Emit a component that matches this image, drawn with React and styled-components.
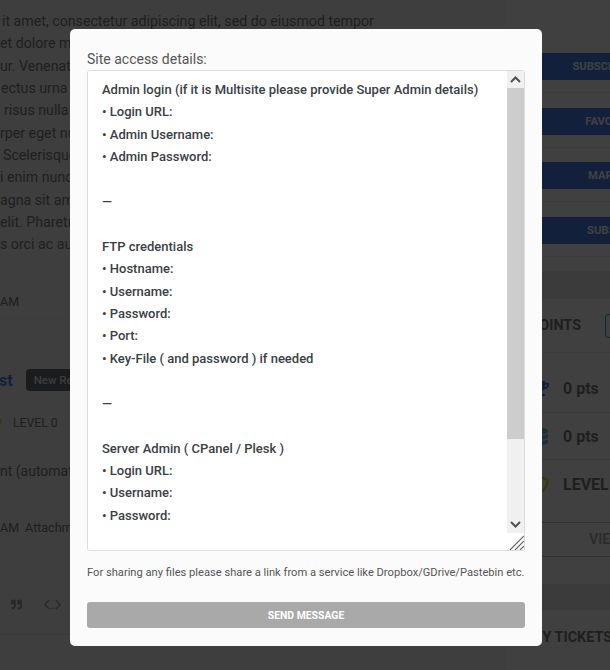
import React from "react";
import styled, { createGlobalStyle } from "styled-components";
import { FaTrophy, FaDatabase, FaShieldAlt, FaQuoteRight } from "react-icons/fa";

const hatch = `url("data:image/svg+xml,%3Csvg xmlns='http://www.w3.org/2000/svg' width='17' height='17'%3E%3Cpath d='M2 16 16 2M7 16 16 7M12 16 16 12' fill='none' stroke='%23666' stroke-width='1.2'/%3E%3C/svg%3E")`;

const GlobalStyle = createGlobalStyle`
  html, body {
    margin: 0;
    height: 100%;
    overflow: hidden;
    background: #fff;
    font-family: Roboto, "Liberation Sans", sans-serif;
  }
`;

const Page = styled.div`
  width: 610px;
  height: 670px;
  overflow: hidden;
  display: grid;
  grid-template-columns: 505px 1fr;
`;

const Main = styled.div`
  background: #f5f5f5;
  color: #7e7e7e;
  overflow: hidden;
`;

const Article = styled.div`
  padding-top: 10px;
  font-size: 14.2px;
  line-height: 22.35px;
  white-space: nowrap;
  height: 283px;
  box-sizing: border-box;
`;

const ArticleLine = styled.div`
  padding-left: ${(props) => props.indent || 0}px;
`;

const MetaRow = styled.div`
  height: 36px;
  margin-top: ${(props) => props.top || 0}px;
  display: flex;
  align-items: center;
  gap: 6px;
  font-size: 12.5px;
`;

const Divider = styled.div`
  height: 1px;
  background: #eeeeee;
`;

const ReplyHead = styled.div`
  margin-top: 39px;
  height: 42px;
  display: flex;
  align-items: center;
  gap: 13px;
  border-bottom: 1px solid #efefef;
`;

const AuthorName = styled.strong`
  font-size: 16px;
  color: #4a80f0;
  margin-left: -1px;
`;

const Chip = styled.span`
  background: #6c6f78;
  color: #ececec;
  font-size: 11.5px;
  font-weight: 500;
  height: 22px;
  padding: 0 8px;
  border-radius: 4px;
  display: flex;
  align-items: center;
`;

const LevelRow = styled.div`
  height: 42px;
  display: flex;
  align-items: center;
  gap: 11px;
  font-size: 12.2px;
  margin-left: -10px;
  border-bottom: 1px solid #efefef;
  svg {
    color: #ffcc33;
  }
`;

const ReplyText = styled.div`
  margin-top: 15px;
  font-size: 14px;
  line-height: 22px;
  white-space: nowrap;
`;

const Toolbar = styled.div`
  margin-top: 30px;
  height: 60px;
  box-sizing: border-box;
  border-bottom: 1px solid #e4e4e4;
  display: flex;
  align-items: center;
  gap: 22px;
  padding-left: 11px;
  color: #a4a4a4;
`;

const Side = styled.aside`
  background: #fff;
  overflow: hidden;
  color: #7d7d7d;
`;

const SideTitle = styled.h3`
  margin: 0 0 0 28px;
  height: 53px;
  font-size: 17px;
  font-weight: 700;
  line-height: 22px;
  transform: translateY(-18px);
`;

const ActionRow = styled.div`
  height: 40px;
  box-sizing: border-box;
  margin-bottom: 14.6px;
  border-bottom: 1px solid #ededed;
`;

const ActionButton = styled.div`
  margin-left: 20px;
  width: 206px;
  height: 27px;
  background: #4880f0;
  color: #fff;
  font-size: 11.2px;
  font-weight: 700;
  text-transform: uppercase;
  white-space: nowrap;
  display: flex;
  align-items: center;
  justify-content: center;
`;

const Band = styled.div`
  height: 28px;
  background: #ececec;
`;

const PointsHead = styled.div`
  height: 54px;
  box-sizing: border-box;
  display: flex;
  align-items: center;
  padding-left: 25px;
  font-size: 14.4px;
  font-weight: 700;
  gap: 24px;
  border-bottom: 1px solid #ececec;
`;

const BadgeBox = styled.span`
  flex: none;
  width: 40px;
  height: 24px;
  box-sizing: border-box;
  border: 1px solid #2ea3c4;
  border-radius: 3px;
`;

const StatList = styled.div`
  padding: 12px 0 14px;
  border-bottom: 1px solid #c8c8c8;
`;

const StatRow = styled.div`
  height: 47.5px;
  box-sizing: border-box;
  display: flex;
  align-items: center;
  gap: 14px;
  padding-left: 27px;
  font-size: 16px;
  font-weight: 700;
  white-space: nowrap;
  border-bottom: ${(props) => (props.last ? "0" : "1px solid #e4e4e4")};
  svg {
    flex: none;
    color: ${(props) => props.tint};
    font-size: 17px;
  }
`;

const ViewRow = styled.div`
  height: 34px;
  box-sizing: border-box;
  display: flex;
  align-items: center;
  padding-left: 84px;
  font-size: 14.4px;
  font-weight: 500;
  color: #a8a8a8;
  border-bottom: 1px solid #c8c8c8;
`;

const LowerBand = styled(Band)`
  margin-top: 27px;
  height: 26px;
`;

const TicketsHead = styled.div`
  height: 56px;
  display: flex;
  align-items: center;
  padding-left: 25px;
  font-size: 14.4px;
  font-weight: 700;
  white-space: nowrap;
`;

const Overlay = styled.div`
  position: fixed;
  inset: 0;
  background: rgba(0, 0, 0, 0.75);
`;

const Modal = styled.form`
  position: fixed;
  left: 70px;
  top: 29px;
  width: 472px;
  height: 617px;
  box-sizing: border-box;
  padding: 20px 17px 18px;
  background: #fbfbfb;
  border-radius: 5px;
  display: flex;
  flex-direction: column;
`;

const FieldLabel = styled.label`
  font-size: 14px;
  line-height: 21px;
  color: #555;
`;

const MessageBox = styled.div`
  position: relative;
  width: 438px;
  height: 481px;
`;

const Message = styled.textarea`
  display: block;
  width: 100%;
  height: 100%;
  box-sizing: border-box;
  margin: 0;
  padding: 8px 14px;
  border: 1px solid #ddd;
  border-radius: 3px;
  background: #fff;
  color: #3a4046;
  font-family: Roboto, "Liberation Sans", sans-serif;
  font-size: 13px;
  font-weight: 500;
  line-height: 22.4px;
  outline: none;
  resize: both;

  &::-webkit-resizer {
    background: #fff ${hatch} center no-repeat;
  }
`;

/* headless chromium hides native scrollbars, so this one is drawn over the textarea */
const ScrollBar = styled.div`
  position: absolute;
  top: 1px;
  right: 1px;
  bottom: 18px;
  width: 17px;
  background: #f0f0f0;
  display: flex;
  flex-direction: column;
`;

const ScrollArrow = styled.div`
  flex: none;
  height: 17px;
  display: flex;
  align-items: center;
  justify-content: center;
`;

const ScrollThumb = styled.div`
  flex: none;
  height: 351px;
  background: #cdcdcd;
`;

const ScrollRest = styled.div`
  flex: 1;
`;

const Hint = styled.p`
  margin: 14px 0 0;
  font-size: 11.15px;
  line-height: 16px;
  color: #555;
  white-space: nowrap;
`;

const SendButton = styled.button`
  margin-top: 21px;
  width: 438px;
  height: 26px;
  border: 0;
  border-radius: 3px;
  background: #a9a9a9;
  color: #fff;
  font-family: inherit;
  font-size: 10.4px;
  font-weight: 700;
  text-transform: uppercase;
`;

function Chevron({ d }) {
  return (
    <svg width="11" height="7" viewBox="0 0 11 7">
      <path d={d} fill="none" stroke="#505050" strokeWidth="2" />
    </svg>
  );
}

function CodeGlyph() {
  return (
    <svg width="17" height="11" viewBox="0 0 17 11" fill="none" stroke="currentColor" strokeWidth="1.4">
      <path d="M5 1 1 5.5 5 10M12 1 16 5.5 12 10" />
      <path d="M6.6 9.5h1.2M9.4 9.5h1.2" />
    </svg>
  );
}

const articleLines = [
  { text: "it amet, consectetur adipiscing elit, sed do eiusmod tempor", indent: 2 },
  { text: "et dolore magna aliqua" },
  { text: "ur. Venenatis urna" },
  { text: "ectus urna duis", indent: 1 },
  { text: "risus nulla at", indent: 4 },
  { text: "rper eget nulla" },
  { text: "Scelerisque eu", indent: 3 },
  { text: "i enim nunc faucibus" },
  { text: "agna sit amet purus" },
  { text: "elit. Pharetra vel" },
  { text: "s orci ac auctor" },
];

const accessDetails = `Admin login (if it is Multisite please provide Super Admin details)
• Login URL:
• Admin Username:
• Admin Password:

—

FTP credentials
• Hostname:
• Username:
• Password:
• Port:
• Key-File ( and password ) if needed

—

Server Admin ( CPanel / Plesk )
• Login URL:
• Username:
• Password:

—

Additional notes:
• Staging site:
• Theme and plugin versions:`;

const sideActions = ["Subscribe to topic", "Favorite topic", "Mark as read", "Subscribe all"];

function App() {
  return (
    <>
      <GlobalStyle />
      <Page>
        <Main>
          <Article>
            {articleLines.map((line) => (
              <ArticleLine key={line.text} indent={line.indent}>
                {line.text}
              </ArticleLine>
            ))}
          </Article>
          <MetaRow>AM</MetaRow>
          <Divider />
          <ReplyHead>
            <AuthorName>st</AuthorName>
            <Chip>New Reply</Chip>
          </ReplyHead>
          <LevelRow>
            <FaShieldAlt size={12} />
            <span>LEVEL 0</span>
          </LevelRow>
          <ReplyText>nt (automatic)</ReplyText>
          <MetaRow top={27}>
            AM <span>Attachments</span>
          </MetaRow>
          <Toolbar>
            <FaQuoteRight size={11} />
            <CodeGlyph />
          </Toolbar>
        </Main>
        <Side>
          <SideTitle>TOPIC</SideTitle>
          {sideActions.map((label) => (
            <ActionRow key={label}>
              <ActionButton>{label}</ActionButton>
            </ActionRow>
          ))}
          <Band />
          <PointsHead>
            POINTS <BadgeBox />
          </PointsHead>
          <StatList>
            <StatRow tint="#4a80f0">
              <FaTrophy /> 0 pts
            </StatRow>
            <StatRow tint="#70c0d8">
              <FaDatabase /> 0 pts
            </StatRow>
            <StatRow tint="#ffcc33" last>
              <FaShieldAlt /> LEVEL
            </StatRow>
          </StatList>
          <ViewRow>VIEW</ViewRow>
          <LowerBand />
          <TicketsHead>MY TICKETS</TicketsHead>
        </Side>
      </Page>
      <Overlay />
      <Modal onSubmit={(e) => e.preventDefault()}>
        <FieldLabel htmlFor="details">Site access details:</FieldLabel>
        <MessageBox>
          <Message id="details" readOnly defaultValue={accessDetails} />
          <ScrollBar>
            <ScrollArrow>
              <Chevron d="M1 6 5.5 1.5 10 6" />
            </ScrollArrow>
            <ScrollThumb />
            <ScrollRest />
            <ScrollArrow>
              <Chevron d="M1 1 5.5 5.5 10 1" />
            </ScrollArrow>
          </ScrollBar>
        </MessageBox>
        <Hint>
          For sharing any files please share a link from a service like Dropbox/GDrive/Pastebin etc.
        </Hint>
        <SendButton type="submit">Send Message</SendButton>
      </Modal>
    </>
  );
}

export default App;
